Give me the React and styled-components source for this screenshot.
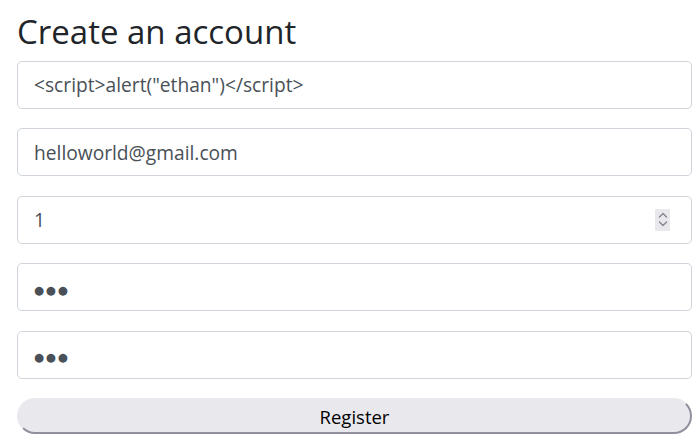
import styled, { createGlobalStyle } from 'styled-components'

const GlobalStyle = createGlobalStyle`
  body {
    margin: 0;
    background: #fff;
    font-family: "Open Sans", "Noto Sans", sans-serif;
  }
`

const App = () => {
  return (
    <>
      <GlobalStyle />
      <Page>
        <Title>Create an account</Title>
        <Form onSubmit={(e) => e.preventDefault()}>
          <Input type="text" defaultValue={'<script>alert("ethan")</script>'} />
          <Input type="email" defaultValue="helloworld@gmail.com" />
          <NumberField>
            <Input type="number" defaultValue="1" />
            <Spinner>
              <svg width="10" height="17" viewBox="0 0 10 17" fill="none" stroke="#85858f" strokeWidth="1.4" strokeLinecap="round" strokeLinejoin="round">
                <path d="M1.5 6 L5 2.5 L8.5 6" />
                <path d="M1.5 11 L5 14.5 L8.5 11" />
              </svg>
            </Spinner>
          </NumberField>
          <Input type="text" masked defaultValue="●●●" />
          <Input type="text" masked defaultValue="●●●" />
          <Button type="submit">Register</Button>
        </Form>
      </Page>
    </>
  )
}

const Page = styled.div`
  padding: 12px 7px 0 17px;
`
const Title = styled.h1`
  margin: 0 0 9px;
  font-size: 33px;
  font-weight: 400;
  line-height: 1.2;
  color: #212529;
`
const Form = styled.form`
  display: flex;
  flex-direction: column;
  gap: 19.5px;
`
const Input = styled.input.withConfig({ shouldForwardProp: (p) => p !== 'masked' })`
  box-sizing: border-box;
  width: 100%;
  height: 48px;
  padding: ${(p) => (p.masked ? '13px 16px 8px' : '8px 16px')};
  font-family: ${(p) => (p.masked ? '"DejaVu Sans", sans-serif' : 'inherit')};
  font-size: ${(p) => (p.masked ? '11.5px' : '19.2px')};
  letter-spacing: ${(p) => (p.masked ? '1.8px' : 'normal')};
  color: #495057;
  background: #fff;
  border: 1px solid #ced4da;
  border-radius: 4.8px;
  outline: none;

  &::-webkit-inner-spin-button,
  &::-webkit-outer-spin-button {
    -webkit-appearance: none;
    margin: 0;
  }
`
const NumberField = styled.div`
  position: relative;
`
const Spinner = styled.span`
  position: absolute;
  top: 13px;
  right: 22px;
  width: 15px;
  height: 22px;
  display: flex;
  align-items: center;
  justify-content: center;
  background: #e9e9ed;
`
const Button = styled.button`
  box-sizing: border-box;
  height: 36px;
  font-family: inherit;
  font-size: 18.5px;
  color: #000;
  background: #e9e9ed;
  border: 2px solid #e9e9ed;
  border-right-color: #8f8f9d;
  border-bottom-color: #8f8f9d;
  border-radius: 18px;
  cursor: pointer;
`

export default App
